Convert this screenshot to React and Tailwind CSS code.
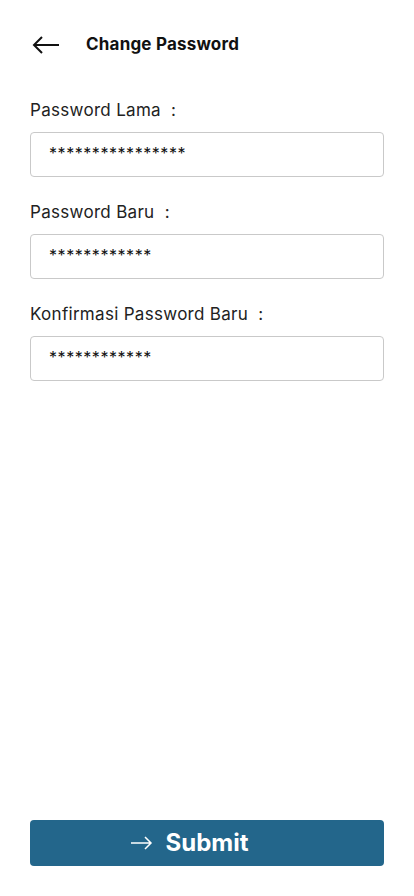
import React from 'react';

const fields = [
  { label: 'Password Lama', value: '****************' },
  { label: 'Password Baru', value: '************' },
  { label: 'Konfirmasi Password Baru', value: '************' },
];

export default function App() {
  return (
    <div className="w-[414px] h-[896px] bg-white flex flex-col px-[30px] font-['Inter',sans-serif] text-[#111]">
      <div className="flex items-center h-[90px] pb-[1px]">
        <svg width="28" height="18" viewBox="0 0 28 18" className="ml-[2px]" fill="none" stroke="#111" strokeWidth="2">
          <path d="M27 9H2M10 1L2 9l8 8" />
        </svg>
        <h1 className="ml-[26px] text-[17px] font-bold tracking-[0.2px]">Change Password</h1>
      </div>
      <div className="flex flex-col gap-[25px] mt-[10px]">
        {fields.map((f, i) => (
          <div key={i} className="flex flex-col">
            <label className="text-[17px] leading-[20px] h-[20px] text-[#222] tracking-[0.3px]">
              {f.label}&nbsp; :
            </label>
            <div className="mt-[12px] h-[45px] border border-[#c9c9c9] rounded-[4px] flex items-center px-[18px] pb-[4px]">
              <span className="text-[16px] tracking-[0.55px]">{f.value}</span>
            </div>
          </div>
        ))}
      </div>
      <div className="flex-1" />
      <button className="mb-[30px] h-[46px] w-full rounded-[4px] bg-[#23668b] text-white flex items-center justify-center gap-[13px] pr-[36px]">
        <svg width="23" height="14" viewBox="0 0 23 14" fill="none" stroke="white" strokeWidth="1.5">
          <path d="M1 7h20M15 1l6 6-6 6" />
        </svg>
        <span className="text-[24px] font-bold leading-none pb-[1px]">Submit</span>
      </button>
    </div>
  );
}
